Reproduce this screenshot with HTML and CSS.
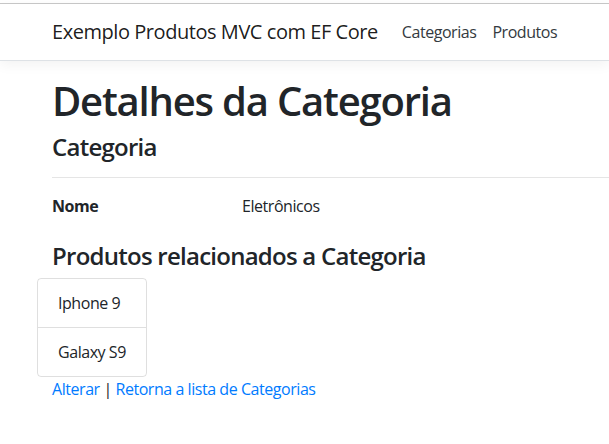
FILE: index.html
```html
<!DOCTYPE html>
<html lang="pt-br">
<head>
<meta charset="utf-8">
<title>Detalhes da Categoria</title>
<link rel="stylesheet" href="styles.css">
</head>
<body>
<header class="navbar">
  <div class="container nav-inner">
    <a class="brand" href="#">Exemplo Produtos MVC com EF Core</a>
    <nav class="nav-links">
      <a class="nav-link" href="#">Categorias</a>
      <a class="nav-link" href="#">Produtos</a>
    </nav>
  </div>
</header>
<main class="container">
  <h1 class="title">Detalhes da Categoria</h1>
  <div>
    <h4 class="subtitle">Categoria</h4>
    <hr class="divider">
    <dl class="row">
      <dt class="col-label">Nome</dt>
      <dd class="col-value">Eletrônicos</dd>
    </dl>
  </div>
  <h4 class="subtitle related">Produtos relacionados a Categoria</h4>
  <ul class="list-group">
    <li class="list-item">Iphone 9</li>
    <li class="list-item">Galaxy S9</li>
  </ul>
  <div class="actions">
    <a href="#" class="link">Alterar</a> | <a href="#" class="link">Retorna a lista de Categorias</a>
  </div>
</main>
</body>
</html>
```
FILE: styles.css
```css
* { box-sizing: border-box; }
html { font-size: 16px; }
body {
  margin: 0;
  font-family: "Open Sans", "Noto Sans", sans-serif;
  font-size: 1rem;
  line-height: 1.5;
  color: #212529;
  background: #fff;
  letter-spacing: -0.028em;
  overflow: hidden;
}
.container {
  width: 1140px;
  padding: 0 15px;
  margin-left: 37px;
}
.navbar {
  margin-top: 3px;
  border-top: 1px solid #c6c6c6;
  border-bottom: 1px solid #dee2e6;
  box-shadow: 0 .25rem .75rem rgba(0,0,0,.05);
  padding: 8px 0;
  margin-bottom: 16px;
  background: #fff;
}
.nav-inner {
  display: flex;
  align-items: center;
}
.brand {
  font-size: 1.25rem;
  line-height: 1.5;
  padding: 5px 0;
  margin-right: 16px;
  color: rgba(0,0,0,.9);
  text-decoration: none;
  white-space: nowrap;
}
.nav-links { display: flex; }
.nav-link {
  padding: 8px;
  color: #343a40;
  text-decoration: none;
}
.title {
  font-size: 2.5rem;
  font-weight: 600;
  line-height: 1.2;
  margin: 0 0 8px;
  letter-spacing: -0.03em;
}
.subtitle {
  font-size: 1.5rem;
  font-weight: 600;
  line-height: 1.2;
  margin: 0 0 8px;
  letter-spacing: -0.031em;
}
.related { margin-bottom: 7px; }
.divider {
  margin: 15px 0 16px;
  border: 0;
  border-top: 1px solid rgba(0,0,0,.1);
  width: 1110px;
}
.row {
  display: flex;
  margin: 0 -15px 16px;
}
.col-label {
  width: 190px;
  padding: 0 15px;
  font-weight: 700;
  margin: 0;
}
.col-value {
  flex: 1;
  padding: 0 15px;
  margin: 0 0 8px;
}
.list-group {
  list-style: none;
  margin: 0 0 0 -15px;
  padding: 0;
  width: max-content;
  border: 1px solid rgba(0,0,0,.125);
  border-radius: 4px;
}
.list-item {
  padding: 12px 20px;
}
.list-item + .list-item {
  border-top: 1px solid rgba(0,0,0,.125);
}
.link {
  color: #007bff;
  text-decoration: none;
}
```
